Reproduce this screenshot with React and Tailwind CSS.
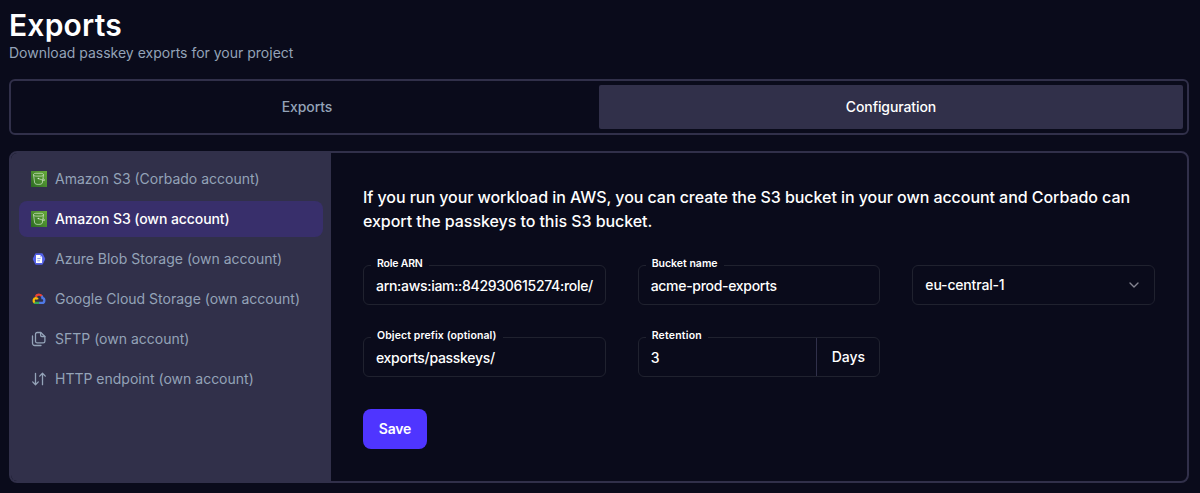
import React from "react";
import { ChevronDown } from "lucide-react";

function BucketIcon() {
  return (
    <svg viewBox="0 0 16 16" className="size-4 shrink-0" fill="none">
      <defs>
        <linearGradient id="s3" x1="0" y1="16" x2="16" y2="0" gradientUnits="userSpaceOnUse">
          <stop stopColor="#2a6a22" />
          <stop offset="1" stopColor="#68ac3a" />
        </linearGradient>
      </defs>
      <rect width="16" height="16" fill="url(#s3)" />
      <g stroke="#d5e8cd" strokeWidth="0.7">
        <path d="M2.500 3.600c0-.9 1.400-1.300 2.600-1.300h4.800c1.200 0 2.600.4 2.600 1.300s-1.400 1.500-2.600 1.500H5.100c-1.200 0-2.600-.6-2.600-1.500z" />
        <path d="M2.500 3.800 3.700 12c.3 1.900 7.300 1.900 7.600 0l1.200-8.200" />
        <path d="M7.300 7.500 12.300 9.400c1.700.6 1.800-.7-.3-1.900" />
      </g>
      <circle cx="7.300" cy="7.500" r="0.7" fill="#e4f1df" />
    </svg>
  );
}

function AzureIcon() {
  return (
    <svg viewBox="0 0 16 16" className="size-4 shrink-0" fill="none">
      <path d="M5 2.200h6a1 1 0 0 1 .8.5l2.200 4.600a1.400 1.400 0 0 1 0 1.400l-2.200 4.600a1 1 0 0 1-.8.5H5a1 1 0 0 1-.8-.5L2 8.700a1.400 1.400 0 0 1 0-1.400l2.200-4.600A1 1 0 0 1 5 2.200z" fill="#5360e6" />
      <path d="M5 4h4.100l2 2v6H5z" fill="#fff" />
      <path d="M9.100 4v2.200h2.200" fill="#aab5fa" />
      <path d="M6.300 7.600h3.400M6.300 9.800h2.700" stroke="#6d8df0" strokeWidth="0.8" />
    </svg>
  );
}

function GoogleCloudIcon() {
  return (
    <svg viewBox="0 0 16 16" className="size-4 shrink-0" fill="none" strokeWidth="2.300">
      <path d="M4.700 5.800C5.600 3.200 9.500 2.600 11 5.600" stroke="#ea4335" />
      <path d="M10.500 5.200c.7.600 1 1.200 1 2 2.600.2 2.400 4.700-.3 4.700H8" stroke="#4f79e6" />
      <path d="M8.200 11.900H4.500c-.6 0-1-.2-1.300-.4" stroke="#34a853" />
      <path d="M3.700 11.600C1.900 10.500 2.500 7.300 4.700 7.200c.8 0 1.700.5 2 1.200" stroke="#fbbc05" />
    </svg>
  );
}

function FilesIcon() {
  return (
    <svg viewBox="0 0 16 16" className="size-4 shrink-0" fill="none" stroke="currentColor" strokeWidth="1.300" strokeLinecap="round" strokeLinejoin="round">
      <path d="M9.800 1.500H6.200A1.700 1.700 0 0 0 4.500 3.200v7a1.700 1.700 0 0 0 1.700 1.700h6a1.700 1.700 0 0 0 1.700-1.700V5.500z" />
      <path d="M9.600 1.700v2.600a1.200 1.200 0 0 0 1.200 1.200h3" />
      <path d="M1.500 5v7.300a2.200 2.200 0 0 0 2.200 2.200h6.300" />
    </svg>
  );
}

function ArrowsIcon() {
  return (
    <svg viewBox="0 0 16 16" className="size-4 shrink-0" fill="none" stroke="currentColor" strokeWidth="1.300" strokeLinecap="round" strokeLinejoin="round">
      <path d="M4.500 2.300v11.400M1.700 10.900l2.800 2.800 2.800-2.800M11.500 13.700V2.300M8.700 5.100l2.800-2.800 2.800 2.800" />
    </svg>
  );
}

const destinations = [
  { label: "Amazon S3 (Corbado account)", Icon: BucketIcon },
  { label: "Amazon S3 (own account)", Icon: BucketIcon, active: true },
  { label: "Azure Blob Storage (own account)", Icon: AzureIcon },
  { label: "Google Cloud Storage (own account)", Icon: GoogleCloudIcon },
  { label: "SFTP (own account)", Icon: FilesIcon },
  { label: "HTTP endpoint (own account)", Icon: ArrowsIcon },
];

function Field({ label, value, suffix, labelClass = "" }) {
  return (
    <div className="relative flex h-10 rounded-md border border-[#20222f] text-sm font-medium">
      <span
        className={
          "absolute -top-2.5 left-[7px] bg-[#0a0b1b] px-1.5 text-[10.5px] leading-4 font-semibold whitespace-nowrap " +
          labelClass
        }
      >
        {label}
      </span>
      <div className="flex min-w-0 flex-1 items-center overflow-hidden pt-0.5 pl-3 tracking-[-0.3px] whitespace-nowrap">
        <span>{value}</span>
      </div>
      {suffix && (
        <div className="flex w-[63px] items-center justify-center border-l border-[#30304a] tracking-[-0.1px]">
          {suffix}
        </div>
      )}
    </div>
  );
}

export default function App() {
  return (
    <main className="flex h-[493px] flex-col overflow-hidden bg-[#0a0b1b] pr-[11px] pl-[9px] font-['Inter',sans-serif] text-white">
      <header className="h-[79px] shrink-0 pt-[7px]">
        <h1 className="text-[30px] leading-9 font-semibold tracking-[0.2px]">Exports</h1>
        <p className="text-sm text-[#94a3b8]">Download passkey exports for your project</p>
      </header>

      <div className="flex h-14 shrink-0 rounded-md border-2 border-[#31304a] p-1 text-sm font-medium tracking-[-0.1px]">
        <div className="flex flex-1 items-center justify-center text-[#94a3b8]">Exports</div>
        <div className="flex w-[584px] items-center justify-center rounded-[2px] bg-[#31304a]">Configuration</div>
      </div>

      <section className="mt-4 flex h-[332px] shrink-0 overflow-hidden rounded-lg border-2 border-[#31304a]">
        <nav className="flex w-80 shrink-0 flex-col gap-1 bg-[#31304a] p-2">
          {destinations.map(({ label, Icon, active }) => (
            <div
              key={label}
              className={
                "flex h-9 items-center gap-2 rounded-lg px-3 text-sm " +
                (active ? "bg-[#382f6b] font-medium tracking-[-0.08px] text-white" : "text-[#94a3b8]")
              }
            >
              <Icon />
              <span className="whitespace-nowrap">{label}</span>
            </div>
          ))}
        </nav>

        <div className="flex flex-1 flex-col gap-8 p-8">
          <p className="text-base leading-6 font-medium tracking-[-0.058px]">
            If you run your workload in AWS, you can create the S3 bucket in your own account and Corbado can
            <br />
            export the passkeys to this S3 bucket.
          </p>
          <div className="grid grid-cols-3 gap-8">
            <Field label="Role ARN" value="arn:aws:iam::842930615274:role/" labelClass="tracking-[-0.2px]" />
            <Field label="Bucket name" value="acme-prod-exports" />
            <div className="flex h-10 items-center justify-between rounded-md border border-[#20222f] px-3 text-sm font-medium tracking-[-0.17px]">
              <span>eu-central-1</span>
              <ChevronDown className="size-4 text-[#858591]" strokeWidth={2} />
            </div>
            <Field label="Object prefix (optional)" value="exports/passkeys/" labelClass="tracking-[0.1px]" />
            <Field label="Retention" value="3" suffix="Days" labelClass="tracking-[0.2px]" />
          </div>
          <button className="h-10 w-16 rounded-lg bg-[#4f35ff] text-sm font-semibold tracking-[-0.2px]">Save</button>
        </div>
      </section>
    </main>
  );
}
